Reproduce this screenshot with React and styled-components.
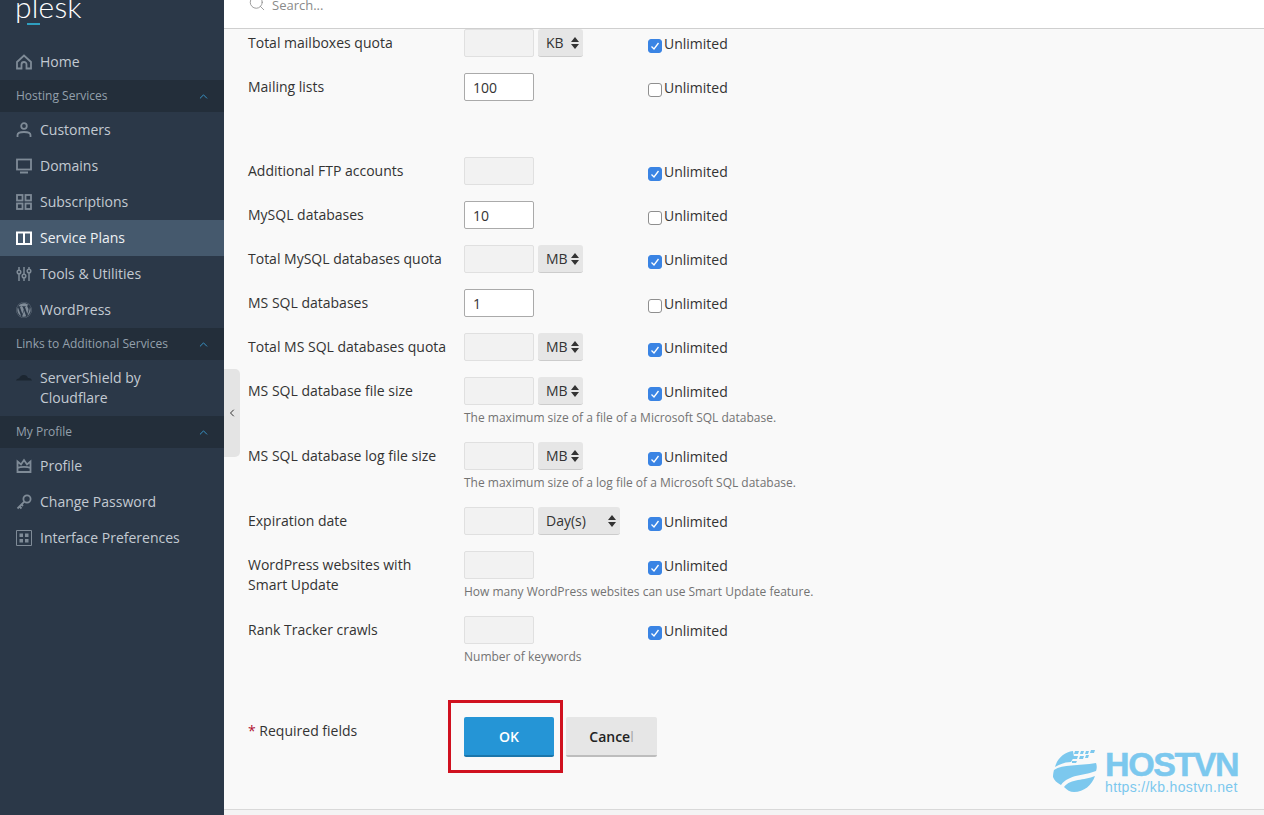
import React from "react";
import styled, { createGlobalStyle } from "styled-components";
import { ChevronUp, ChevronLeft, Search } from "lucide-react";
import { FaWordpress } from "react-icons/fa";

const GlobalStyle = createGlobalStyle`
  html, body {
    margin: 0;
    height: 815px;
    overflow: hidden;
    background: #f9f9f9;
    font-family: "Open Sans", "Liberation Sans", sans-serif;
    font-size: 14px;
    color: #333;
  }
  * { box-sizing: border-box; }
`;

const Page = styled.div`
  display: flex;
  width: 1264px;
  height: 815px;
  position: relative;
  overflow: hidden;
`;

const Sidebar = styled.nav`
  width: 224px;
  flex: none;
  background: #2b3848;
  color: #c3cad2;
`;

const Brand = styled.div`
  height: 44px;
  padding-left: 15px;
  position: relative;
  overflow: hidden;
  color: #fff;
  font-family: "Lato", sans-serif;
  font-weight: 300;
  font-size: 30px;
  line-height: 12px;
  letter-spacing: 0.2px;

  i {
    position: absolute;
    left: 27px;
    top: 23px;
    width: 13px;
    height: 2px;
    background: #2f9fc0;
  }
`;

const NavItem = styled.a`
  display: flex;
  align-items: ${(p) => (p.$tall ? "flex-start" : "center")};
  min-height: 36px;
  padding: ${(p) => (p.$tall ? "8px 16px 8px" : "0 16px")};
  gap: 8px;
  line-height: 20px;
  background: ${(p) => (p.$active ? "#45596d" : "transparent")};
  color: ${(p) => (p.$active ? "#eef1f4" : "#c3cad2")};

  svg {
    flex: none;
    width: 16px;
    height: 16px;
    color: ${(p) => (p.$active ? "#fff" : "#7f8b97")};
  }
`;

const NavGroup = styled.div`
  display: flex;
  align-items: center;
  justify-content: space-between;
  height: 32px;
  padding: 0 14px 2px 16px;
  background: #232e3a;
  color: #94a0ac;
  font-size: 12px;

  svg {
    color: #3a9bd0;
    margin-top: 2px;
  }
`;

const Main = styled.div`
  flex: 1;
  min-width: 0;
  display: flex;
  flex-direction: column;
  position: relative;
`;

const Header = styled.header`
  height: 29px;
  flex: none;
  background: #fff;
  border-bottom: 1px solid #cfcfcf;
  padding-left: 24px;
  display: flex;
  align-items: flex-start;
  gap: 6px;
  overflow: hidden;
  color: #8a8a8a;
  font-size: 13px;

  svg {
    margin-top: -6px;
    flex: none;
  }

  span {
    margin-top: -5px;
    line-height: 20px;
  }
`;

const Collapse = styled.div`
  position: absolute;
  left: 0;
  top: 369px;
  width: 16px;
  height: 88px;
  padding-right: 1px;
  background: #e4e4e4;
  border-radius: 0 5px 5px 0;
  display: flex;
  align-items: center;
  justify-content: center;
  color: #333;
`;

const Form = styled.main`
  flex: 1;
  padding: 0 24px;
  display: flex;
  flex-direction: column;
`;

const Row = styled.div`
  display: grid;
  grid-template-columns: 216px 184px 1fr;
  grid-template-rows: auto auto;
  margin-bottom: ${(p) => (p.$gap ? "56px" : "16px")};
`;

const Label = styled.label`
  grid-row: 1 / 3;
  padding-top: 4px;
  line-height: 20px;
  width: 205px;
  color: #333;
`;

const Controls = styled.div`
  display: flex;
  gap: 4px;
  height: 28px;
`;

const Input = styled.div`
  width: 70px;
  height: 28px;
  border: 1px solid ${(p) => (p.$disabled ? "#e0e0e0" : "#aaa")};
  border-radius: 2px;
  background: ${(p) => (p.$disabled ? "#f2f2f2" : "#fff")};
  padding-left: 8px;
  line-height: 28px;
  color: #333;
`;

const Select = styled.div`
  width: ${(p) => (p.$wide ? "82px" : "45px")};
  height: 28px;
  background: #e6e6e6;
  border-radius: 3px;
  border-bottom: 1px solid #ccc;
  padding: 0 4px 0 8px;
  display: flex;
  align-items: center;
  justify-content: space-between;
  color: #333;
`;

const Arrows = styled.svg`
  width: 8px;
  height: 12px;
  flex: none;
`;

const Unlimited = styled.div`
  display: flex;
  align-items: center;
  height: 28px;
  padding-top: 1px;
  color: #333;
`;

const Box = styled.span`
  width: 14px;
  height: 14px;
  margin-top: 4px;
  margin-right: 2px;
  border-radius: 3px;
  border: 1px solid ${(p) => (p.$checked ? "#3a84e4" : "#8f8f8f")};
  background: ${(p) => (p.$checked ? "#3a84e4" : "#fff")};
  display: flex;
  align-items: center;
  justify-content: center;
`;

const Hint = styled.div`
  grid-column: 2 / 4;
  margin: 5px 0 1px;
  font-size: 12px;
  line-height: 15px;
  color: #737373;
`;

const Actions = styled.div`
  display: grid;
  grid-template-columns: 216px auto auto 1fr;
  margin-top: 36px;
  align-items: start;
`;

const Required = styled.div`
  color: #333;
  line-height: 20px;
  padding-top: 4px;

  b {
    color: #b01030;
    font-weight: 400;
  }
`;

const Button = styled.button`
  height: 40px;
  border: none;
  font: inherit;
  font-weight: 600;
  border-radius: 2px;
  padding: 0;
  width: ${(p) => (p.$primary ? "90px" : "91px")};
  margin-right: ${(p) => (p.$primary ? "12px" : "0")};
  background: ${(p) => (p.$primary ? "#2595d6" : "#e6e6e6")};
  border-bottom: 2px solid ${(p) => (p.$primary ? "#1b76ab" : "#bdbdbd")};
  color: ${(p) => (p.$primary ? "#fff" : "#222")};

  span {
    color: #a8a8a8;
    font-weight: 400;
  }
`;

const Highlight = styled.div`
  position: absolute;
  left: 224px;
  top: 700px;
  width: 115px;
  height: 73px;
  border: 3px solid #d0111f;
  pointer-events: none;
`;

const Footer = styled.footer`
  height: 6px;
  flex: none;
  border-top: 1px solid #d9d9d9;
  background: #f4f4f4;
`;

const Watermark = styled.div`
  position: absolute;
  left: 829px;
  top: 749px;
  display: flex;
  gap: 8px;
  color: #7cc8ee;
`;

const WatermarkText = styled.div`
  font-family: "Liberation Sans", sans-serif;
  display: flex;
  flex-direction: column;

  strong {
    font-size: 34px;
    line-height: 31px;
    letter-spacing: -1.4px;
    font-weight: 700;
    -webkit-text-stroke: 0.5px #7cc8ee;
  }

  span {
    font-size: 14px;
    line-height: 15px;
    letter-spacing: 0.35px;
  }
`;

const Icon = ({ children }) => (
  <svg viewBox="0 0 16 16" fill="none" stroke="currentColor" strokeWidth="1.8">
    {children}
  </svg>
);

const icons = {
  home: <Icon><path d="M1 8 8 1.500 15 8v6.500h-4.500V10.500a2.500 2.500 0 0 0-5 0v4H1z" /></Icon>,
  user: <Icon><circle cx="8" cy="4" r="2.800" /><path d="M1.500 15v-2C1.500 10.500 4 10 8 10s6.500.5 6.500 3v2" /></Icon>,
  monitor: <Icon><rect x="1" y="1.500" width="14" height="10" /><path d="M4 14.500h8" strokeWidth="2" /></Icon>,
  grid: <Icon><rect x="1" y="1" width="5.500" height="5.500" /><rect x="9.500" y="1" width="5.500" height="5.500" /><rect x="1" y="9.500" width="5.500" height="5.500" /><rect x="9.500" y="9.500" width="5.500" height="5.500" /></Icon>,
  book: <Icon><path d="M1 2.500h14v11.500H1zM8 2.500V14" strokeWidth="2" /></Icon>,
  tools: <Icon><path d="M3 1v3M3 8v7M8 1v7M8 12v3M13 1v2M13 7v8" strokeWidth="1.500" /><circle cx="3" cy="6" r="1.800" strokeWidth="1.500" /><circle cx="8" cy="10" r="1.800" strokeWidth="1.500" /><circle cx="13" cy="5" r="1.800" strokeWidth="1.500" /></Icon>,
  wp: <FaWordpress />,
  cloud: <svg viewBox="0 0 16 16" fill="#1c2631"><path d="M0 12.500c.5-1.500 2-2 3.200-2 .8-2.500 2.600-3.700 4.800-3.500 2 .1 3.300 1.200 4 3 1.800-.2 3.300.5 4 2.500z" /></svg>,
  crown: <Icon><path d="M1.500 3.500 5 6.500 8 2l3 4.500 3.500-3v10.500h-13zM1.500 10c3-1.500 10-1.500 13 0" /></Icon>,
  key: <Icon><circle cx="11" cy="5" r="3.600" /><path d="M8.300 7.700 1.500 14.500M3.500 12.500l2 2M5.500 10.500l1.500 1.500" /></Icon>,
  prefs: <svg viewBox="0 0 16 16" fill="currentColor"><path d="M.5.500h15v15H.5z" fill="none" stroke="currentColor" /><path d="M3.500 3.500h3.500V7H3.500zM9 3.500h3.500V7H9zM3.500 9H7v3.500H3.500zM9 9h3.500v3.500H9z" /></svg>,
};

const navTop = [
  { icon: "user", label: "Customers" },
  { icon: "monitor", label: "Domains" },
  { icon: "grid", label: "Subscriptions" },
  { icon: "book", label: "Service Plans", active: true },
  { icon: "tools", label: "Tools & Utilities" },
  { icon: "wp", label: "WordPress" },
];

const navProfile = [
  { icon: "crown", label: "Profile" },
  { icon: "key", label: "Change Password" },
  { icon: "prefs", label: "Interface Preferences" },
];

const rows = [
  { label: "Total mailboxes quota", unit: "KB", checked: true },
  { label: "Mailing lists", value: "100", gap: true },
  { label: "Additional FTP accounts", checked: true },
  { label: "MySQL databases", value: "10" },
  { label: "Total MySQL databases quota", unit: "MB", checked: true },
  { label: "MS SQL databases", value: "1" },
  { label: "Total MS SQL databases quota", unit: "MB", checked: true },
  { label: "MS SQL database file size", unit: "MB", checked: true, hint: "The maximum size of a file of a Microsoft SQL database." },
  { label: "MS SQL database log file size", unit: "MB", checked: true, hint: "The maximum size of a log file of a Microsoft SQL database." },
  { label: "Expiration date", unit: "Day(s)", wide: true, checked: true },
  { label: "WordPress websites with Smart Update", checked: true, hint: "How many WordPress websites can use Smart Update feature." },
  { label: "Rank Tracker crawls", checked: true, hint: "Number of keywords" },
];

const Group = ({ children }) => (
  <NavGroup>
    {children}
    <ChevronUp size={13} strokeWidth={1.7} />
  </NavGroup>
);

const Globe = () => (
  <svg width="44" height="44" viewBox="0 0 44 44" fill="currentColor">
    <path d="M2 18C4 10 11 3 20 2l1 6-3 5c-6 0-11 2-16 5z" />
    <path d="M22 2h4l-1 3h-4zM28 2h3l-1 3h-3zM33 2h3l-1 3h-3zM38 1h4l-1 3h-4zM20 7h5l-1 3h-5zM27 7h4l-1 3h-4zM33 6h3l-1 3h-3zM19 12h5l-1 2h-4z" />
    <path d="M0 28c0-3 .5-5 1-7 9-6 24-4 42-7 1 3 1 5 0 8-12 5-27 3-35 14-4-2-7-5-8-8z" />
    <path d="M11 38c7-9 20-6 31-11-3 9-11 16-21 16-4 0-7-2-10-5z" />
  </svg>
);

const FormRow = ({ label, value, unit, wide, checked, hint, gap }) => (
  <Row $gap={gap}>
    <Label>{label}</Label>
    <Controls>
      <Input $disabled={!value}>{value}</Input>
      {unit && (
        <Select $wide={wide}>
          {unit}
          <Arrows viewBox="0 0 8 12" fill="#333">
            <path d="M4 0 8 5H0zM4 12 0 7h8z" />
          </Arrows>
        </Select>
      )}
    </Controls>
    <Unlimited>
      <Box $checked={checked}>
        {checked && (
          <svg width="10" height="10" viewBox="0 0 10 10" fill="none" stroke="#fff" strokeWidth="1.300">
            <path d="M1.500 5.500 4 8l4.500-6" />
          </svg>
        )}
      </Box>
      Unlimited
    </Unlimited>
    {hint && <Hint>{hint}</Hint>}
  </Row>
);

export default function App() {
  return (
    <Page>
      <GlobalStyle />
      <Sidebar>
        <Brand>
          plesk
          <i />
        </Brand>
        <NavItem>{icons.home}Home</NavItem>
        <Group>Hosting Services</Group>
        {navTop.map((item) => (
          <NavItem key={item.label} $active={item.active}>
            {icons[item.icon]}
            {item.label}
          </NavItem>
        ))}
        <Group>Links to Additional Services</Group>
        <NavItem $tall>
          {icons.cloud}
          <span>ServerShield by Cloudflare</span>
        </NavItem>
        <Group>My Profile</Group>
        {navProfile.map((item) => (
          <NavItem key={item.label}>
            {icons[item.icon]}
            {item.label}
          </NavItem>
        ))}
      </Sidebar>
      <Main>
        <Header>
          <Search size={18} strokeWidth={1.1} />
          <span>Search...</span>
        </Header>
        <Collapse>
          <ChevronLeft size={12} />
        </Collapse>
        <Form>
          {rows.map((row) => (
            <FormRow key={row.label} {...row} />
          ))}
          <Actions>
            <Required>
              <b>*</b> Required fields
            </Required>
            <Button $primary>OK</Button>
            <Button>Cance<span>l</span></Button>
          </Actions>
        </Form>
        <Footer />
        <Highlight />
        <Watermark>
          <Globe />
          <WatermarkText>
            <strong>HOSTVN</strong>
            <span>https://kb.hostvn.net</span>
          </WatermarkText>
        </Watermark>
      </Main>
    </Page>
  );
}
